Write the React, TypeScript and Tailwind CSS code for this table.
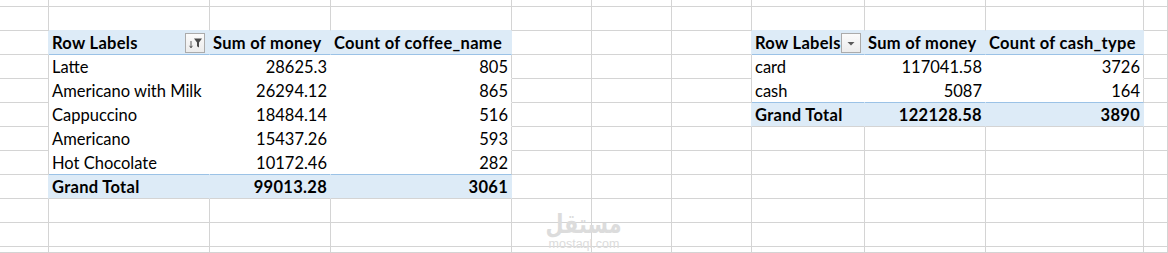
import type { ReactNode } from "react"

type Kind = "grid" | "head" | "body" | "bodyLast" | "total"

const colW = [
  "w-[49px]",
  "w-[161px]",
  "w-[121px]",
  "w-[181px]",
  "w-[80px]",
  "w-[80px]",
  "w-[80px]",
  "w-[113px]",
  "w-[121px]",
  "w-[158px]",
  "flex-1",
]

const rowH = ["h-[7px]", "h-[24px]", "h-[24px]", "h-[24px]", "h-[24px]", "h-[24px]", "h-[24px]", "h-[24px]", "h-[24px]", "h-[24px]", "h-[24px]", "h-[6px]"]

// pivot tables: columns, header row, total row
const pivots = [
  { cols: [1, 2, 3], head: 2, total: 8 },
  { cols: [7, 8, 9], head: 2, total: 5 },
]

function kindAt(r: number, c: number): Kind {
  for (const p of pivots) {
    if (!p.cols.includes(c)) continue
    if (r === p.head) return "head"
    if (r === p.total) return "total"
    if (r === p.total - 1) return "bodyLast"
    if (r > p.head && r < p.total) return "body"
  }
  return "grid"
}

function isLastCol(c: number) {
  return pivots.some((p) => p.cols[p.cols.length - 1] === c)
}

type CellData = { t: string; num?: boolean; bold?: boolean; filter?: "funnel" | "arrow" }

const content: Record<string, CellData> = {
  "2-1": { t: "Row Labels", bold: true, filter: "funnel" },
  "2-2": { t: "Sum of money", bold: true },
  "2-3": { t: "Count of coffee_name", bold: true },
  "3-1": { t: "Latte" },
  "3-2": { t: "28625.3", num: true },
  "3-3": { t: "805", num: true },
  "4-1": { t: "Americano with Milk" },
  "4-2": { t: "26294.12", num: true },
  "4-3": { t: "865", num: true },
  "5-1": { t: "Cappuccino" },
  "5-2": { t: "18484.14", num: true },
  "5-3": { t: "516", num: true },
  "6-1": { t: "Americano" },
  "6-2": { t: "15437.26", num: true },
  "6-3": { t: "593", num: true },
  "7-1": { t: "Hot Chocolate" },
  "7-2": { t: "10172.46", num: true },
  "7-3": { t: "282", num: true },
  "8-1": { t: "Grand Total", bold: true },
  "8-2": { t: "99013.28", num: true, bold: true },
  "8-3": { t: "3061", num: true, bold: true },

  "2-7": { t: "Row Labels", bold: true, filter: "arrow" },
  "2-8": { t: "Sum of money", bold: true },
  "2-9": { t: "Count of cash_type", bold: true },
  "3-7": { t: "card" },
  "3-8": { t: "117041.58", num: true },
  "3-9": { t: "3726", num: true },
  "4-7": { t: "cash" },
  "4-8": { t: "5087", num: true },
  "4-9": { t: "164", num: true },
  "5-7": { t: "Grand Total", bold: true },
  "5-8": { t: "122128.58", num: true, bold: true },
  "5-9": { t: "3890", num: true, bold: true },
}

function FilterButton({ type }: { type: "funnel" | "arrow" }) {
  return (
    <span className="ml-auto mr-[1px] flex h-[20px] w-[20px] shrink-0 items-center justify-center border border-[#ababab] bg-gradient-to-b from-[#fbfbfb] to-[#ececec]">
      {type === "funnel" ? (
        <svg width="18" height="18" viewBox="0 0 18 18">
          <path d="M8 4.5h8l-3 4v5l-2-1.2V8.5z" fill="#4a4a4a" />
          <path d="M5 7v6.5M3.6 11.8 5 13.8l1.4-2" stroke="#4a4a4a" strokeWidth="0.9" fill="none" />
        </svg>
      ) : (
        <svg width="18" height="18" viewBox="0 0 18 18">
          <path d="M5.5 8h7L9 11.5z" fill="#5a5a5a" />
        </svg>
      )}
    </span>
  )
}

function Cell({ r, c }: { r: number; c: number }) {
  const kind = kindAt(r, c)
  const right = kindAt(r, c + 1)
  const below = kindAt(r + 1, c)
  const d = content[`${r}-${c}`]

  let bg = "bg-white"
  let br = "border-r-[#d4d4d4]"
  let bb = "border-b-[#d4d4d4]"

  if (kind === "head" || kind === "total") {
    bg = "bg-[#ddebf7]"
    br = "border-r-[#ddebf7]"
    bb = kind === "head" ? "border-b-[#9bc2e6]" : "border-b-[#d4d4d4]"
  } else if (kind === "body" || kind === "bodyLast") {
    br = isLastCol(c) ? "border-r-[#d4d4d4]" : "border-r-white"
    bb = kind === "bodyLast" ? "border-b-[#9bc2e6]" : "border-b-white"
  } else {
    if (right === "head" || right === "total") br = "border-r-[#ddebf7]"
    if (below === "head") bb = "border-b-[#ddebf7]"
  }

  let inner: ReactNode = null
  if (d) {
    inner = (
      <>
        <span className={`${d.num ? "ml-auto" : ""} ${d.bold ? "font-bold tracking-[0.3px]" : ""} whitespace-nowrap`}>{d.t}</span>
        {d.filter && <FilterButton type={d.filter} />}
      </>
    )
  }

  return (
    <div className={`${colW[c]} ${bg} ${br} ${bb} flex h-full shrink-0 items-center overflow-hidden border-r border-b px-[3px] pt-[1px] leading-[22px]`}>
      {inner}
    </div>
  )
}

export default function App() {
  return (
    <div className="relative h-[253px] w-[1168px] overflow-hidden bg-white font-['Lato','Liberation_Sans',sans-serif] text-[16.5px] text-black">
      {rowH.map((h, r) => (
        <div key={r} className={`${h} flex`}>
          {colW.map((_, c) => (
            <Cell key={c} r={r} c={c} />
          ))}
        </div>
      ))}

      {/* mostaql watermark */}
      <div className="absolute left-[548px] top-[210px] flex w-[72px] flex-col items-center text-[#dcdcdc]">
        <span dir="rtl" className="scale-x-[0.8] font-['DejaVu_Sans',sans-serif] text-[26px] font-bold leading-[29px]">
          مستقل
        </span>
        <span className="font-['Liberation_Sans',sans-serif] text-[12.5px] leading-[10px]">mostaql.com</span>
      </div>
    </div>
  )
}
